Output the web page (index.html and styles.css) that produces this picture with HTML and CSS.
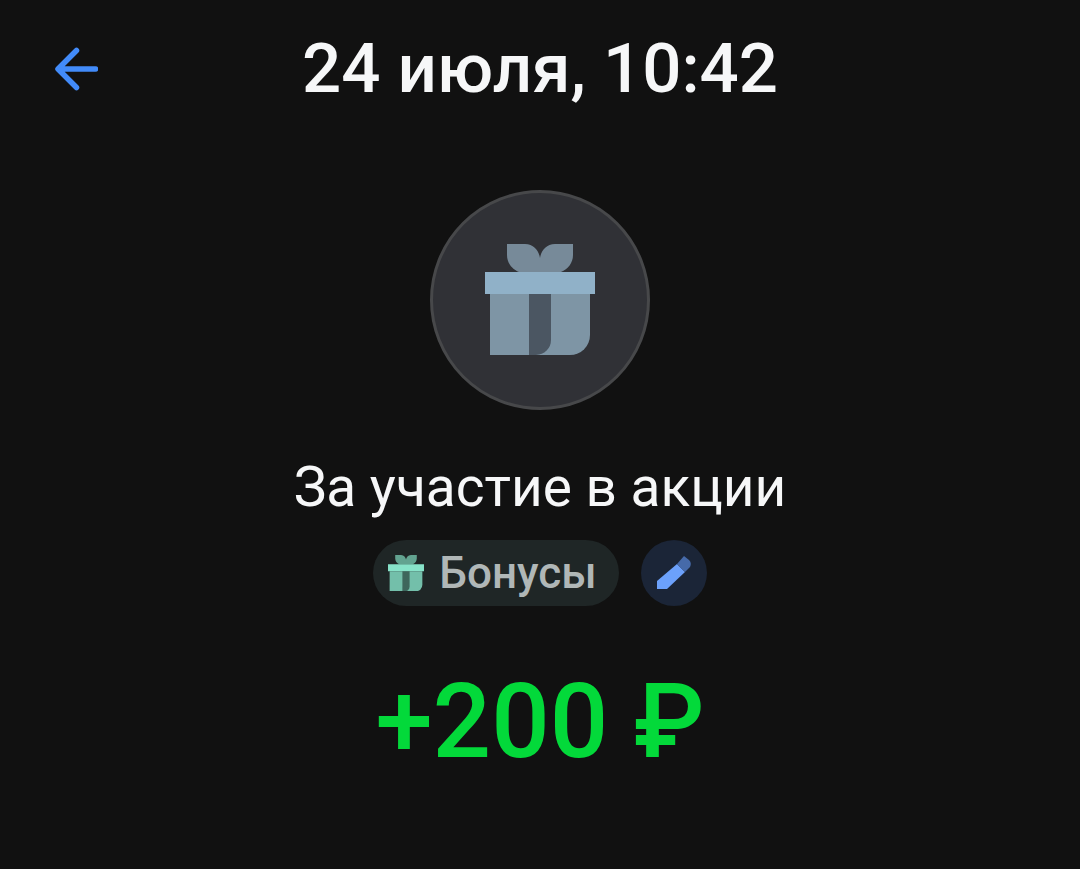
FILE: index.html
```html
<!DOCTYPE html>
<html lang="ru">

<head>
    <meta charset="UTF-8">
    <meta name="viewport" content="width=device-width, initial-scale=1.0">
    <title>Детали операции</title>
    <link rel="stylesheet" href="styles.css">
</head>

<body>
    <header class="header">
        <button type="button" class="back-button" aria-label="Назад">
            <svg width="44" height="44" viewBox="0 0 44 44" fill="none" stroke="currentColor" stroke-width="5.5" stroke-linecap="round" stroke-linejoin="round">
                <path d="M22.5 3.5L4 22L22.5 40.5M5 22H41.5"/>
            </svg>
        </button>
        <h1 class="title">24 июля, 10:42</h1>
    </header>

    <main class="operation">
        <div class="logo">
            <svg class="gift" viewBox="0 0 110 112" aria-hidden="true">
                <path class="gift-bow" d="M22 0H40C49 0 54 7 55 14C56 7 61 0 70 0H88V11C88 19 83 25 76 28H34C27 25 22 19 22 11Z"/>
                <path class="gift-lid" d="M0 28H110V50H0Z"/>
                <path class="gift-box" d="M5 50H105V91A20 20 0 0 1 85 111H5Z"/>
                <path class="gift-ribbon" d="M44 50H66V96A15 15 0 0 1 51 111H44Z"/>
            </svg>
        </div>

        <h2 class="name">За участие в акции</h2>

        <div class="category-row">
            <button type="button" class="category">
                <svg class="gift" viewBox="0 0 110 112" aria-hidden="true">
                    <path class="gift-bow" d="M22 0H40C49 0 54 7 55 14C56 7 61 0 70 0H88V11C88 19 83 25 76 28H34C27 25 22 19 22 11Z"/>
                    <path class="gift-lid" d="M0 28H110V50H0Z"/>
                    <path class="gift-box" d="M5 50H105V91A20 20 0 0 1 85 111H5Z"/>
                    <path class="gift-ribbon" d="M44 50H66V96A15 15 0 0 1 51 111H44Z"/>
                </svg>
                <span>Бонусы</span>
            </button>
            <button type="button" class="edit-button" aria-label="Изменить категорию">
                <svg width="66" height="66" viewBox="0 0 66 66" aria-hidden="true">
                    <path fill="#6ca1fb" d="M16 41L36 24L44 32L26 49H16Z"/>
                    <path fill="#466aa9" d="M36 24L43 16L48 20Q51 23 49 27L44 32Z"/>
                </svg>
            </button>
        </div>

        <p class="amount">+200 ₽</p>
    </main>
</body>

</html>
```
FILE: styles.css
```css
body {
    margin: 0;
    background-color: #111111;
    color: #f6f7f8;
    font-family: Roboto, "Noto Sans", sans-serif;
}

button {
    border: none;
    padding: 0;
    background: none;
    font: inherit;
    cursor: pointer;
}

button svg {
    display: block;
}

.header {
    display: grid;
    grid-template-columns: 44px 1fr 44px;
    align-items: center;
    padding: 24px 54px;
}

.back-button {
    color: #428bf9;
}

.title {
    margin: 0;
    font-size: 69px;
    font-weight: 500;
    line-height: 90px;
    text-align: center;
}

.operation {
    display: flex;
    flex-direction: column;
    align-items: center;
    padding: 52px 24px 64px;
    text-align: center;
}

.logo {
    display: flex;
    align-items: center;
    justify-content: center;
    box-sizing: border-box;
    width: 220px;
    height: 220px;
    border: 3px solid #47484a;
    border-radius: 50%;
    background-color: #303136;
}

.logo .gift {
    width: 110px;
}

.gift-bow {
    fill: #778a99;
}

.gift-lid {
    fill: #90b1c8;
}

.gift-box {
    fill: #7e95a5;
}

.gift-ribbon {
    fill: #4b5662;
}

.name {
    margin: 44px 0 20px;
    font-size: 55px;
    font-weight: 400;
    line-height: 66px;
}

.category-row {
    display: flex;
    gap: 22px;
}

.category {
    display: flex;
    align-items: center;
    gap: 15px;
    height: 66px;
    padding: 0 22px 0 15px;
    border-radius: 33px;
    background-color: #1f2626;
    color: #b0b7b7;
    font-size: 44px;
    font-weight: 500;
    line-height: 66px;
}

.category .gift {
    width: 36px;
}

.category .gift-bow {
    fill: #62a390;
}

.category .gift-lid {
    fill: #87e3c9;
}

.category .gift-box {
    fill: #73bfaa;
}

.category .gift-ribbon {
    fill: #3e665c;
}

.edit-button {
    border-radius: 50%;
    background-color: #1b2537;
}

.amount {
    margin: 56px 0 0;
    color: #03d93a;
    font-size: 103px;
    font-weight: 500;
    line-height: 120px;
}
```
